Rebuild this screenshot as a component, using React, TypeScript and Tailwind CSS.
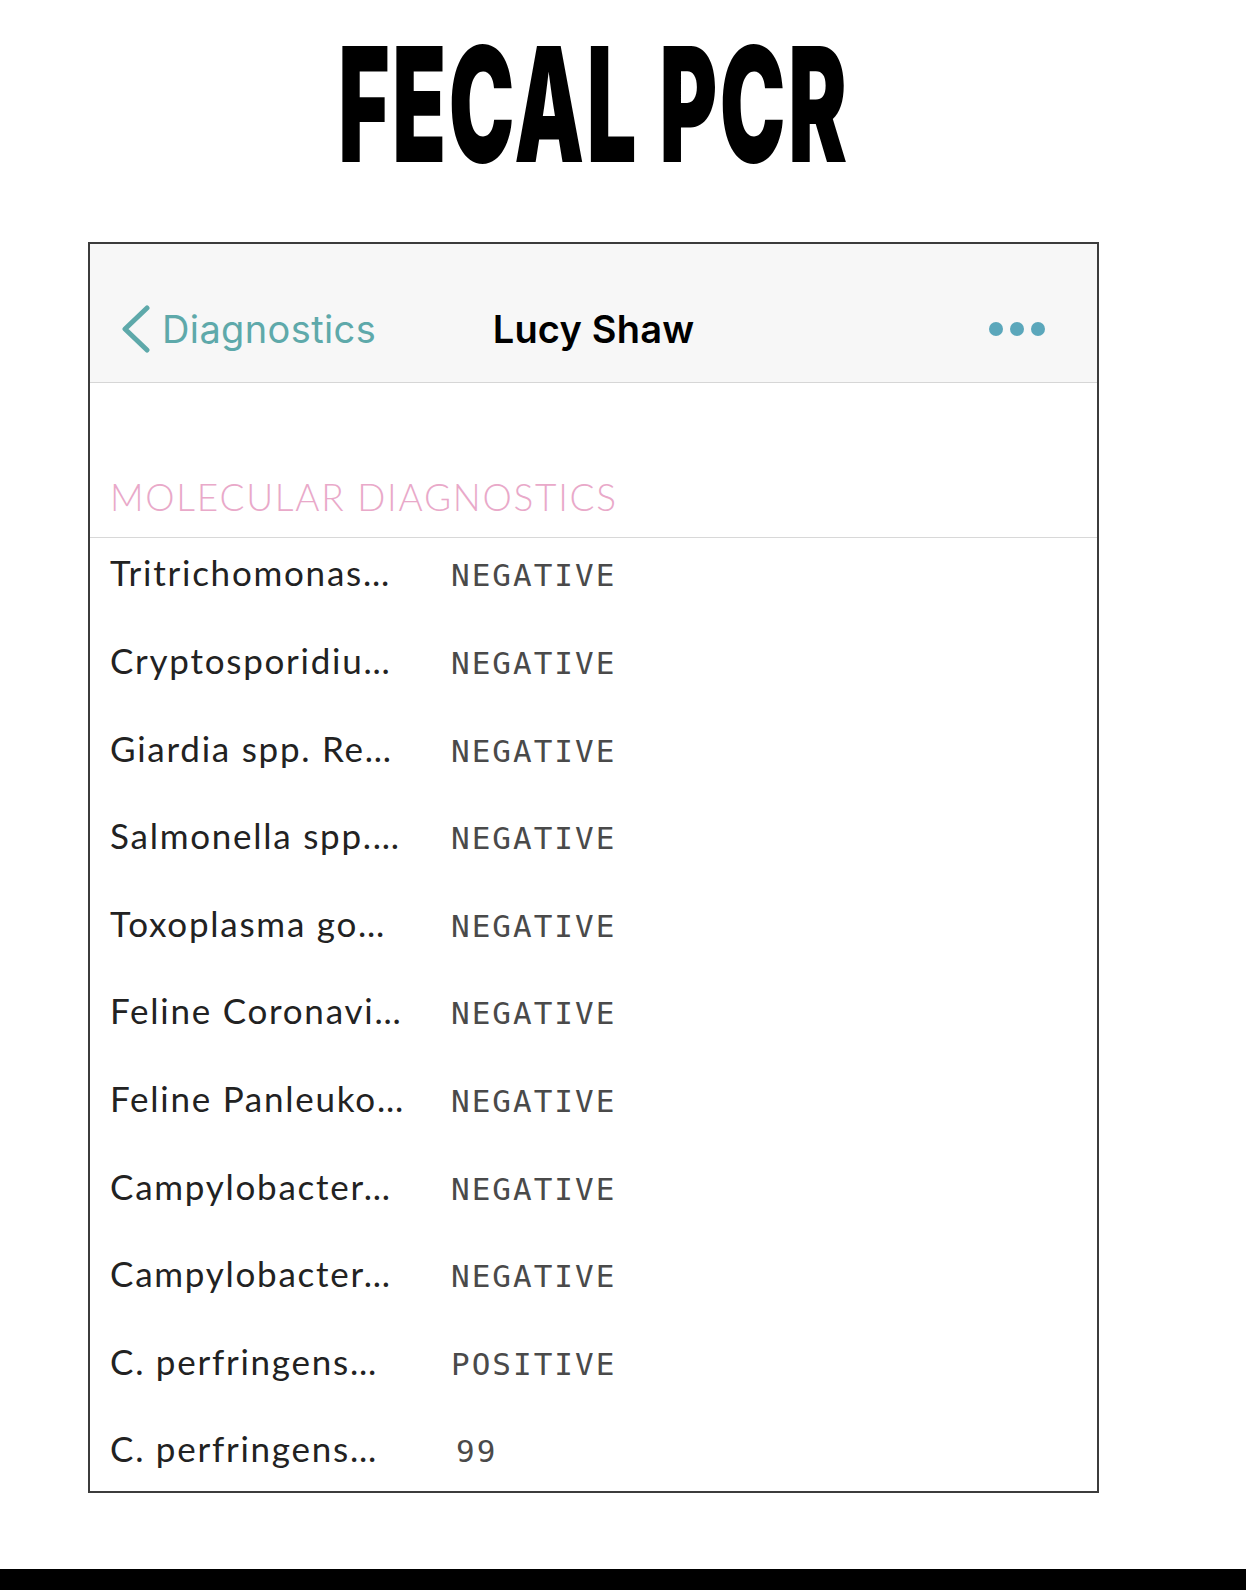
const rows: [string, string][] = [
  ["Tritrichomonas…", "NEGATIVE"],
  ["Cryptosporidiu…", "NEGATIVE"],
  ["Giardia spp. Re…", "NEGATIVE"],
  ["Salmonella spp.…", "NEGATIVE"],
  ["Toxoplasma go…", "NEGATIVE"],
  ["Feline Coronavi…", "NEGATIVE"],
  ["Feline Panleuko…", "NEGATIVE"],
  ["Campylobacter…", "NEGATIVE"],
  ["Campylobacter…", "NEGATIVE"],
  ["C. perfringens…", "POSITIVE"],
  ["C. perfringens…", "99"],
];

function BackChevron() {
  return (
    <svg width="30" height="48" viewBox="0 0 30 48" fill="none">
      <polyline
        points="26,3 4,24 26,45"
        stroke="#5ea9aa"
        strokeWidth="5"
        strokeLinecap="round"
        strokeLinejoin="round"
      />
    </svg>
  );
}

function NavBar() {
  return (
    <div className="h-[139px] border-b border-[#d6d6d6] bg-[#f7f7f7] pt-[50px]">
      <div className="grid h-[70px] grid-cols-[1fr_auto_1fr] items-center">
        <div className="flex items-center gap-[11px] pl-[31px]">
          <BackChevron />
          <span className="font-['Inter','Liberation_Sans',sans-serif] text-[38px] leading-none tracking-[0.01em] text-[#5ea9aa]">
            Diagnostics
          </span>
        </div>
        <span className="font-['Inter','Liberation_Sans',sans-serif] text-[38px] font-semibold leading-none tracking-[0.005em] text-black">
          Lucy Shaw
        </span>
        <div className="flex items-center justify-end gap-[7px] pr-[52px]">
          <span className="h-[14px] w-[14px] rounded-full bg-[#5ba7bb]" />
          <span className="h-[14px] w-[14px] rounded-full bg-[#5ba7bb]" />
          <span className="h-[14px] w-[14px] rounded-full bg-[#5ba7bb]" />
        </div>
      </div>
    </div>
  );
}

export default function App() {
  return (
    <div className="flex min-h-[1590px] flex-col bg-white">
      <div className="ml-[88px] w-[1011px] self-start">
        <h1 className="pt-[24px] text-center font-['Inter','Liberation_Sans',sans-serif] text-[160px] font-black leading-none text-black">
          <span className="inline-block scale-x-[0.55] tracking-[0.03em]">FECAL PCR</span>
        </h1>

        <div className="mt-[58px] h-[1251px] overflow-hidden border-2 border-[#3c3c3c] bg-white">
          <NavBar />

          <div className="border-b border-[#d8d8d8] pt-[92px] pb-[18px] pl-[20px]">
            <div className="font-['Lato','Noto_Sans',sans-serif] text-[37px] font-light leading-[1.2] tracking-[0.047em] text-[#e9a9c9]">
              MOLECULAR DIAGNOSTICS
            </div>
          </div>

          {rows.map(([label, value], i) => (
            <div key={i} className="flex h-[87.6px] items-baseline pt-[13px] pl-[20px]">
              <span className="w-[341px] font-['Lato','Noto_Sans',sans-serif] text-[35px] leading-[1.2] tracking-[0.05em] text-[#222]">
                {label}
              </span>
              <span
                className={
                  value === "99"
                    ? "pl-[5px] font-['DejaVu_Sans_Mono','Liberation_Mono',monospace] text-[31px] tracking-[2px] text-[#4a4a4a]"
                    : "font-['DejaVu_Sans_Mono','Liberation_Mono',monospace] text-[31px] tracking-[2px] text-[#4a4a4a]"
                }
              >
                {value}
              </span>
            </div>
          ))}
        </div>
      </div>

      <div className="mt-auto h-[21px] bg-black" />
    </div>
  );
}
